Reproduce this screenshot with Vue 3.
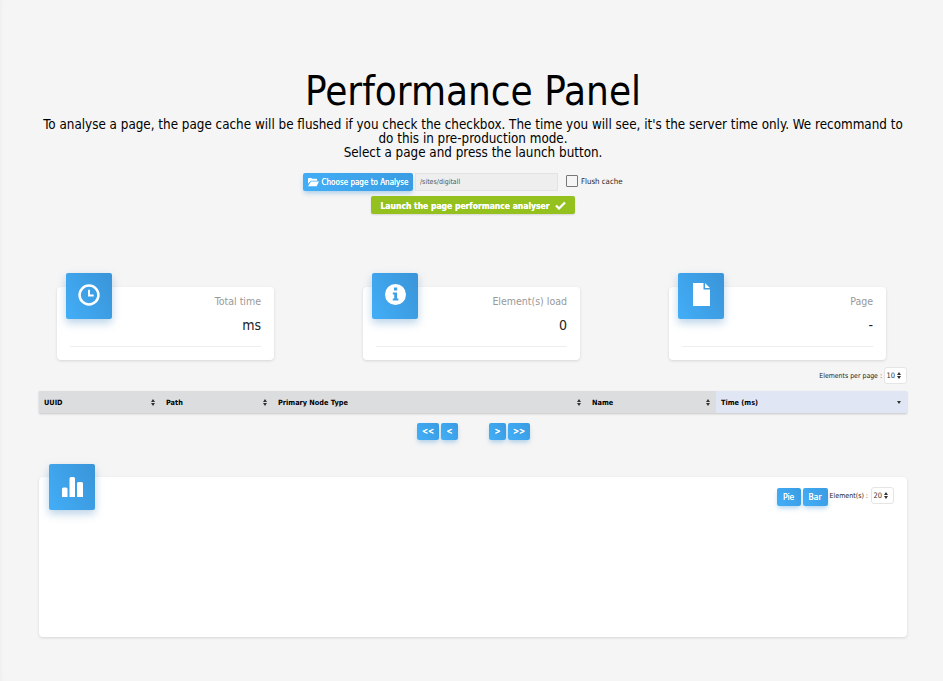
<template>
  <div class="page">
    <header class="head">
      <h1>Performance Panel</h1>
      <p>To analyse a page, the page cache will be flushed if you check the checkbox. The time you will see, it's the server time only. We recommand to do this in pre-production mode.<br>Select a page and press the launch button.</p>
    </header>

    <div class="picker">
      <button class="btn choose">
        <svg width="11" height="10" viewBox="0 0 24 20"><path fill="#fff" d="M0 3a2 2 0 0 1 2-2h5l2 2h9a2 2 0 0 1 2 2v2H6L0 14zM6.500 9H24l-5 10H0z"/></svg>
        Choose page to Analyse
      </button>
      <input class="path" value="/sites/digitall" readonly>
      <label class="flush"><span class="box"></span>Flush cache</label>
    </div>
    <button class="btn launch">
      Launch the page performance analyser
      <svg width="11" height="9" viewBox="0 0 22 18"><path fill="none" stroke="#fff" stroke-width="4.500" d="M2 9l6 6L20 3"/></svg>
    </button>

    <section class="cards">
      <div v-for="c in cards" :key="c.label" class="card">
        <div class="tile">
          <svg v-if="c.icon === 'clock'" width="22" height="22" viewBox="0 0 21 21"><circle cx="10.500" cy="10.500" r="9" fill="none" stroke="#fff" stroke-width="2.400"/><path d="M10.500 5.500v5.500h4.500" fill="none" stroke="#fff" stroke-width="1.800"/></svg>
          <svg v-else-if="c.icon === 'info'" width="21" height="21" viewBox="0 0 21 21"><path fill="#fff" fill-rule="evenodd" d="M10.500 0a10.500 10.500 0 1 1 0 21a10.500 10.500 0 0 1 0-21zM9 3.500v3h3.200v-3zM7.800 8.500v2h1.400v4H7.800v2h5.600v-2H12v-6z"/></svg>
          <svg v-else width="17" height="23" viewBox="0 0 17 23"><path fill="#fff" d="M0 0h10.500v6.500H17V23H0zM12 0l5 5h-5z"/></svg>
        </div>
        <div class="label">{{ c.label }}</div>
        <div class="value">{{ c.value }}</div>
        <div class="rule"></div>
      </div>
    </section>

    <div class="per-page">
      <span>Elements per page :</span>
      <div class="select">10<span class="updown"></span></div>
    </div>

    <table class="grid">
      <thead>
        <tr>
          <th v-for="h in columns" :key="h.name" :class="{ sorted: h.sorted }" :style="{ width: h.width + 'px' }">
            <div class="th-in">{{ h.name }}<span :class="h.sorted ? 'down' : 'updown'"></span></div>
          </th>
        </tr>
      </thead>
    </table>

    <div class="pager">
      <div class="pair">
        <button class="btn wide">&lt;&lt;</button>
        <button class="btn">&lt;</button>
      </div>
      <div class="pair">
        <button class="btn">&gt;</button>
        <button class="btn wide">&gt;&gt;</button>
      </div>
    </div>

    <section class="chart">
      <div class="tile">
        <svg width="21" height="20" viewBox="0 0 21 20"><path fill="#fff" d="M0 12a1.500 1.500 0 0 1 1.500-1.500h2.500A1.500 1.500 0 0 1 5.500 12v8H0zM7.500 1.500A1.500 1.500 0 0 1 9 0h2.500A1.500 1.500 0 0 1 13 1.500V20H7.500zM15 6.500A1.500 1.500 0 0 1 16.500 5h3A1.500 1.500 0 0 1 21 6.500V20h-6z"/></svg>
      </div>
      <div class="chart-tools">
        <button class="btn">Pie</button>
        <button class="btn">Bar</button>
        <span>Element(s) :</span>
        <div class="select">20<span class="updown"></span></div>
      </div>
    </section>
  </div>
</template>

<script setup>
const cards = [
  { icon: 'clock', label: 'Total time', value: 'ms' },
  { icon: 'info', label: 'Element(s) load', value: '0' },
  { icon: 'file', label: 'Page', value: '-' }
]

const columns = [
  { name: 'UUID', width: 122 },
  { name: 'Path', width: 112 },
  { name: 'Primary Node Type', width: 314 },
  { name: 'Name', width: 129 },
  { name: 'Time (ms)', width: 191, sorted: true }
]
</script>

<style>
html, body { background: #f5f5f5; }
</style>

<style scoped>
.page {
  height: 681px; box-sizing: border-box; overflow: hidden;
  padding: 0 36px 0 39px; background: #f5f5f5;
  box-shadow: inset 3px 0 3px -1px rgba(0, 0, 0, .025);
  font-family: "DejaVu Sans", sans-serif; font-stretch: condensed; color: #000;
  display: flex; flex-direction: column;
}
.head { text-align: center; padding-top: 65px; }
h1 { margin: 0; font-size: 40px; line-height: 53px; font-weight: 400; }
.head p { margin: 0; font-size: 13.340px; line-height: 14px; }

.picker {
  display: flex; align-items: center;
  margin: 13px 0 0 264px; height: 18px;
}
.btn {
  border: 0; border-radius: 2px; background: linear-gradient(60deg, #42aef7, #3a9ce2); color: #fff;
  font: 400 8.500px "DejaVu Sans", sans-serif; font-stretch: condensed;
  text-shadow: 0 0 .5px #fff;
  box-shadow: 0 3px 5px -1px rgba(50, 140, 210, .4);
  padding: 0; white-space: nowrap;
}
.choose {
  width: 110px; height: 18px; display: flex; align-items: center;
  justify-content: center; gap: 3px; font-size: 8px;
}
.path {
  width: 143px; height: 18px; box-sizing: border-box; margin-left: 2px; padding: 0 4px;
  border: 1px solid #e3e3e3; background: #eee; color: #555;
  font: 7px "DejaVu Sans", sans-serif; font-stretch: condensed; outline: 0;
}
.flush {
  display: flex; align-items: center; gap: 3px;
  margin: -2px 0 0 8px; font-size: 7.800px; color: #222;
}
.box {
  width: 12px; height: 12px; box-sizing: border-box; border: 1px solid #777; border-radius: 1px; background: #f5f5f5;
}
.launch {
  align-self: center; width: 204px; height: 18px; margin-top: 5px; padding-top: 1px;
  background: #95c11f; font-size: 8.500px; font-weight: 700; border-radius: 2px;
  display: flex; align-items: center; justify-content: center; gap: 5px;
  box-shadow: 0 1px 2px rgba(0, 0, 0, .12);
}

.cards {
  display: flex; justify-content: space-between;
  margin: 73px 21px 0 18px;
}
.card {
  position: relative; width: 217px; height: 73px; box-sizing: border-box;
  background: #fff; border-radius: 4px; padding: 8px 13px 0;
  box-shadow: 0 1px 3px rgba(0, 0, 0, .13); text-align: right;
}
.tile {
  position: absolute; left: 9px; top: -14px; width: 46px; height: 46px;
  border-radius: 2px; background: linear-gradient(60deg, #42aef7, #3a94d8);
  box-shadow: 0 4px 8px rgba(60, 130, 190, .35);
  display: flex; align-items: center; justify-content: center;
}
.card .tile svg { margin-bottom: 3px; }
.label { font-size: 10.500px; line-height: 13px; color: #999; }
.value { font-size: 14px; line-height: 18px; margin-top: 8px; color: #222; }
.rule { height: 1px; background: #eee; margin-top: 12px; }

.per-page {
  display: flex; align-items: center; justify-content: flex-end; gap: 2px;
  margin-top: 7px; font-size: 6.900px; color: #222;
}
.select {
  position: relative; width: 23px; height: 17px; box-sizing: border-box;
  border: 1px solid #e5e5e5; border-radius: 3px; background: #fff;
  display: flex; align-items: center; justify-content: flex-end; gap: 2px;
  padding-right: 4px; font-size: 7.500px; color: #333;
}
.updown, .down { position: relative; display: inline-block; width: 5px; height: 7px; }
.updown::before, .updown::after, .down::after {
  content: ""; position: absolute; left: 0;
  border-left: 2.500px solid transparent; border-right: 2.500px solid transparent;
}
.updown::before { top: 0; border-bottom: 3px solid #333; }
.updown::after { bottom: 0; border-top: 3px solid #333; }
.down::after { top: 2px; border-top: 3px solid #333; }

.grid {
  width: 868px; margin-top: 7px; border-collapse: collapse; table-layout: fixed;
  box-shadow: 0 1px 2px rgba(0, 0, 0, .2);
}
th {
  box-sizing: border-box;
  height: 22px; padding: 0 5px; background: #dcddde;
  font-size: 7.300px; font-weight: 700; text-align: left;
}
th.sorted { background: #e1e6f4; }
.th-in { display: flex; align-items: center; justify-content: space-between; }

.pager { display: flex; justify-content: center; gap: 31px; margin-top: 10px; margin-left: 1px; }
.pair { display: flex; gap: 2px; }
.pager .btn { height: 17px; width: 17px; font-size: 8px; font-weight: 700; }
.pager .btn.wide { width: 22px; }

.chart {
  position: relative; height: 160px; margin-top: 37px; background: #fff; border-radius: 4px;
  box-shadow: 0 1px 3px rgba(0, 0, 0, .13);
}
.chart .tile { left: 10px; top: -13px; }
.chart-tools {
  position: absolute; right: 13px; top: 10px;
  display: flex; align-items: flex-start; font-size: 7px; color: #222;
}
.chart-tools .btn { height: 18px; width: 24px; margin: 1px 2px 0 0; font-size: 8.500px; }
.chart-tools .btn + .btn { width: 25px; }
.chart-tools > span { margin: 5px 3px 0 0; }
</style>
